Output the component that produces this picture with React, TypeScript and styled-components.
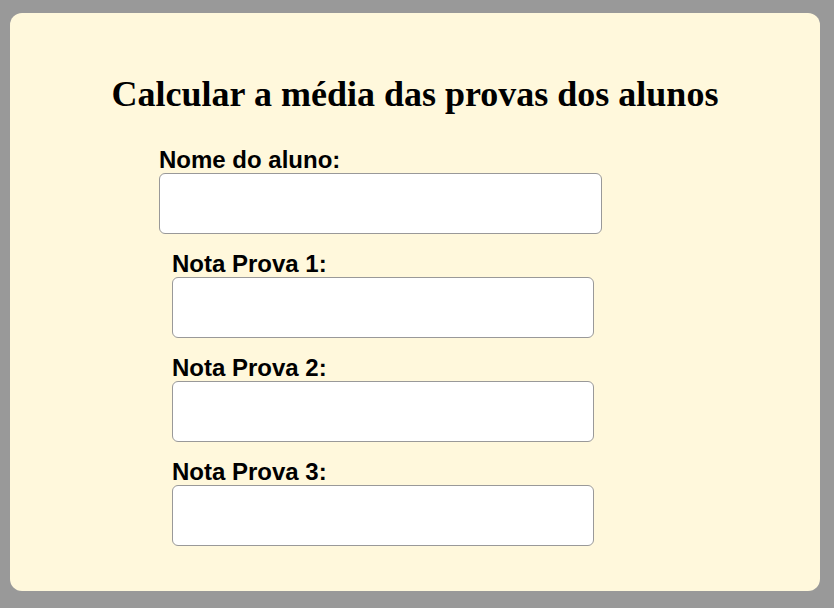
import React from "react";
import styled, { createGlobalStyle } from "styled-components";

const Global = createGlobalStyle`
  html, body { margin: 0; padding: 0; background: #999999; }
  body { font-family: "Liberation Serif", "Times New Roman", serif; }
`;

const Page = styled.div`
  padding: 13px 14px 17px 10px;
  height: 608px;
  box-sizing: border-box;
`;

const Card = styled.div`
  background: #fff8dc;
  border-radius: 12px;
  height: 578px;
  box-sizing: border-box;
  padding-top: 61px;
`;

const Title = styled.h1`
  margin: 0 0 32px;
  text-align: center;
  font-family: "Liberation Serif", "Times New Roman", serif;
  font-weight: bold;
  font-size: 36px;
  line-height: 40px;
  color: #000;
`;

const Group = styled.div<{ $left: number; $width: number }>`
  margin-left: ${(p) => p.$left}px;
  width: ${(p) => p.$width}px;
  display: flex;
  flex-direction: column;
  margin-bottom: 16px;
`;

const Label = styled.label`
  font-family: "Liberation Sans", Arial, sans-serif;
  font-weight: bold;
  font-size: 24px;
  line-height: 27px;
  color: #000;
`;

const Input = styled.input`
  height: 61px;
  box-sizing: border-box;
  border: 1px solid #999999;
  border-radius: 6px;
  background: #fff;
  margin: 0;
`;

const fields = [
  { label: "Nota Prova 1:" },
  { label: "Nota Prova 2:" },
  { label: "Nota Prova 3:" },
];

export default function App() {
  return (
    <>
      <Global />
      <Page>
        <Card>
          <Title>Calcular a média das provas dos alunos</Title>
          <Group $left={149} $width={443}>
            <Label>Nome do aluno:</Label>
            <Input type="text" />
          </Group>
          {fields.map((f) => (
            <Group key={f.label} $left={162} $width={422}>
              <Label>{f.label}</Label>
              <Input type="text" />
            </Group>
          ))}
        </Card>
      </Page>
    </>
  );
}
